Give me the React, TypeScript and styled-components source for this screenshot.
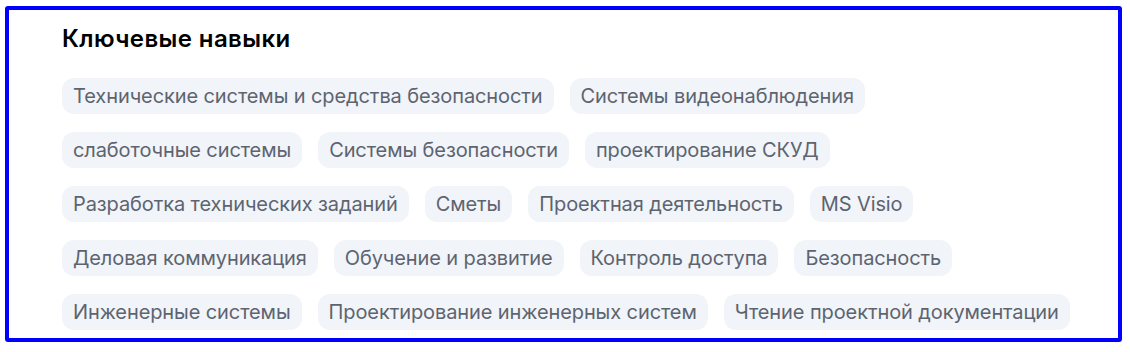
import React from "react";
import styled, {createGlobalStyle} from "styled-components";

const GlobalStyle = createGlobalStyle`
  html, body {
    margin: 0;
    padding: 0;
    background: #fff;
  }
  body {
    font-family: Inter, "Noto Sans", sans-serif;
  }
`;

const Frame = styled.section`
  box-sizing: border-box;
  width: 1117px;
  height: 336px;
  margin: 6px 0 0 5px;
  border: 4px solid #0000ff;
  border-radius: 3px;
  padding: 14px 20px 0 53px;
  overflow: hidden;
`;

const Title = styled.h2`
  margin: 0 0 24px;
  font-size: 24px;
  line-height: 30px;
  letter-spacing: 0.4px;
  font-weight: 600;
  color: #000;
`;

const TagList = styled.ul`
  display: flex;
  flex-wrap: wrap;
  gap: 18px 16px;
  margin: 0;
  padding: 0;
  list-style: none;
`;

const Tag = styled.li`
  height: 36px;
  padding: 0 11px;
  display: flex;
  align-items: center;
  border-radius: 12px;
  background: #f1f4f9;
  color: #5d6470;
  font-size: 20px;
  letter-spacing: -0.1px;
  white-space: nowrap;
`;

const skills = [
    "Технические системы и средства безопасности",
    "Системы видеонаблюдения",
    "слаботочные системы",
    "Системы безопасности",
    "проектирование СКУД",
    "Разработка технических заданий",
    "Сметы",
    "Проектная деятельность",
    "MS Visio",
    "Деловая коммуникация",
    "Обучение и развитие",
    "Контроль доступа",
    "Безопасность",
    "Инженерные системы",
    "Проектирование инженерных систем",
    "Чтение проектной документации",
];

const App: React.FC = () => {
    return (
        <>
            <GlobalStyle/>
            <Frame>
                <Title>Ключевые навыки</Title>
                <TagList>
                    {skills.map(skill => <Tag key={skill}>{skill}</Tag>)}
                </TagList>
            </Frame>
        </>
    );
};

export default App;
